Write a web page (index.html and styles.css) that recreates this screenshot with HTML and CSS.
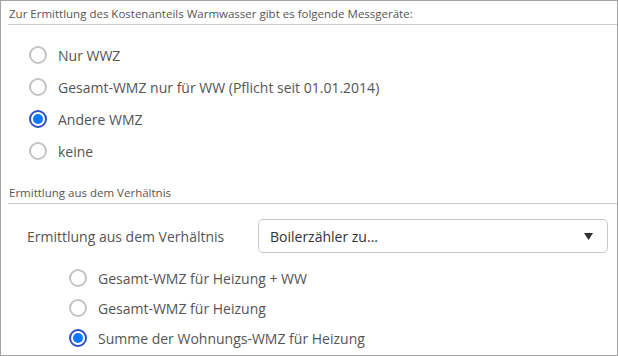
FILE: index.html
```html
<!DOCTYPE html>
<html lang="de">
<head>
    <meta charset="UTF-8">
    <meta name="viewport" content="width=device-width, initial-scale=1.0">
    <title>Kostenanteil Warmwasser</title>
    <link rel="stylesheet" href="styles.css">
</head>
<body>

    <div class="panel">
        <div class="section-title">Zur Ermittlung des Kostenanteils Warmwasser gibt es folgende Messgeräte:</div>

        <ul class="radio-list">
            <li class="radio-item"><span class="radio"></span><span>Nur WWZ</span></li>
            <li class="radio-item"><span class="radio"></span><span>Gesamt-WMZ nur für WW (Pflicht seit 01.01.2014)</span></li>
            <li class="radio-item"><span class="radio checked"></span><span>Andere WMZ</span></li>
            <li class="radio-item"><span class="radio"></span><span>keine</span></li>
        </ul>

        <div class="section-title second">Ermittlung aus dem Verhältnis</div>

        <div class="field-row">
            <span class="field-label">Ermittlung aus dem Verhältnis</span>
            <div class="select">
                <span>Boilerzähler zu...</span>
                <svg class="select-arrow" width="9" height="7" viewBox="0 0 9 7">
                    <path d="M0 0 H9 L4.5 7 Z" fill="#333"/>
                </svg>
            </div>
        </div>

        <ul class="radio-list sub">
            <li class="radio-item"><span class="radio"></span><span>Gesamt-WMZ für Heizung + WW</span></li>
            <li class="radio-item"><span class="radio"></span><span>Gesamt-WMZ für Heizung</span></li>
            <li class="radio-item"><span class="radio checked"></span><span>Summe der Wohnungs-WMZ für Heizung</span></li>
        </ul>
    </div>

</body>
</html>
```

FILE: styles.css
```css
/* Global Styles */
body {
    margin: 0;
    font-family: "Open Sans", Arial, sans-serif;
    color: #555;
    background-color: #fff;
}

.panel {
    width: 618px;
    height: 356px;
    box-sizing: border-box;
    border: 1px solid #a3a3a3;
    overflow: hidden;
}

.section-title {
    margin-left: 7px;
    padding: 5px 0 2px 1px;
    font-size: 11.5px;
    line-height: 16px;
    color: #555;
    border-bottom: 1px solid #ccc;
}

.section-title.second {
    margin-top: 13px;
}

.radio-list {
    list-style: none;
    margin: 14px 0 0;
    padding: 0 0 0 28px;
}

.radio-item {
    display: flex;
    align-items: center;
    gap: 11px;
    height: 32px;
    font-size: 14px;
}

.radio-list.sub {
    margin-top: 10px;
    padding-left: 68px;
}

.radio-list.sub .radio-item {
    height: 30px;
}

.radio {
    width: 18px;
    height: 18px;
    box-sizing: border-box;
    border: 2px solid #c4c4c4;
    border-radius: 50%;
    flex-shrink: 0;
    position: relative;
}

.radio.checked {
    border-color: #2e4fc2;
}

.radio.checked::after {
    content: "";
    position: absolute;
    top: 2px;
    left: 2px;
    width: 10px;
    height: 10px;
    border-radius: 50%;
    background-color: #0a78ff;
}

.field-row {
    display: flex;
    align-items: center;
    margin-top: 15px;
    padding-left: 26px;
}

.field-label {
    width: 231px;
    font-size: 14px;
}

.select {
    width: 350px;
    height: 34px;
    box-sizing: border-box;
    display: flex;
    align-items: center;
    justify-content: space-between;
    padding: 0 14px 0 11px;
    border: 1px solid #c8c8c8;
    border-radius: 5px;
    font-size: 14px;
    color: #333;
}
```
